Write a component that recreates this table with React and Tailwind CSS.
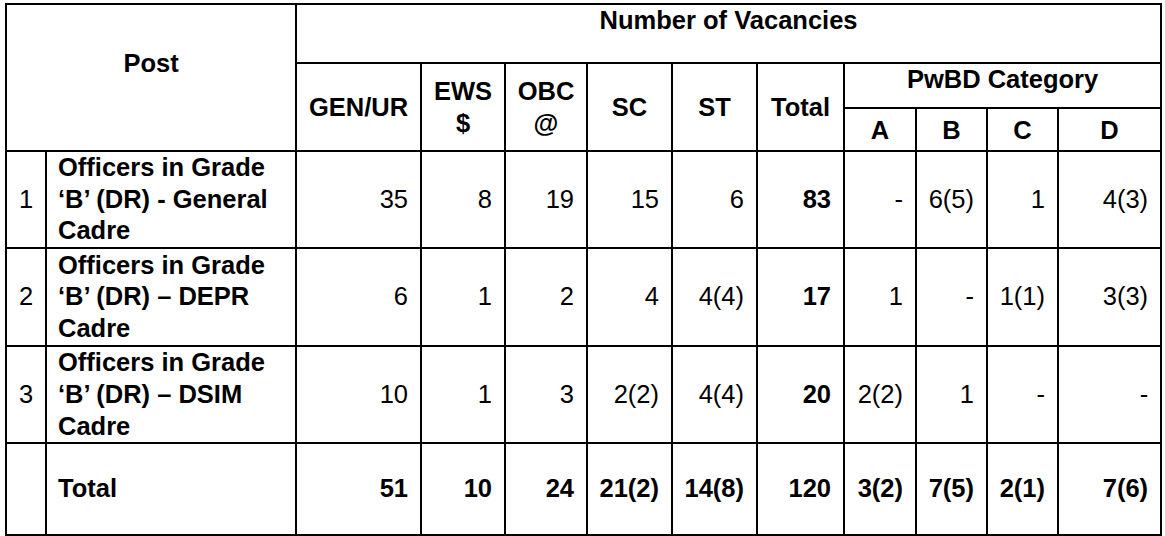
const rows = [
  {
    n: '1',
    post: ['Officers in Grade', '‘B’ (DR) - General', 'Cadre'],
    vals: ['35', '8', '19', '15', '6', '83', '-', '6(5)', '1', '4(3)'],
    h: 'h-[97px]',
  },
  {
    n: '2',
    post: ['Officers in Grade', '‘B’ (DR) – DEPR', 'Cadre'],
    vals: ['6', '1', '2', '4', '4(4)', '17', '1', '-', '1(1)', '3(3)'],
    h: 'h-[98px]',
  },
  {
    n: '3',
    post: ['Officers in Grade', '‘B’ (DR) – DSIM', 'Cadre'],
    vals: ['10', '1', '3', '2(2)', '4(4)', '20', '2(2)', '1', '-', '-'],
    h: 'h-[96px]',
  },
];

const totals = ['51', '10', '24', '21(2)', '14(8)', '120', '3(2)', '7(5)', '2(1)', '7(6)'];

const cell = 'border-r-2 border-b-2 border-black p-0';
const head = cell + ' font-bold text-center';

export default function App() {
  return (
    <div className="min-h-screen bg-white pt-[3px] pl-[5px] text-black font-['Liberation_Sans',Arial,sans-serif] text-[25.5px] leading-[31.7px]">
      <table className="table-fixed border-separate border-spacing-0 border-l-2 border-t-2 border-black w-[1157px]">
        <colgroup>
          <col className="w-[40px]" />
          <col className="w-[250px]" />
          <col className="w-[125px]" />
          <col className="w-[84px]" />
          <col className="w-[82px]" />
          <col className="w-[85px]" />
          <col className="w-[85px]" />
          <col className="w-[87px]" />
          <col className="w-[72px]" />
          <col className="w-[71px]" />
          <col className="w-[71px]" />
          <col className="w-[103px]" />
        </colgroup>
        <thead>
          <tr className="h-[59px]">
            <th colSpan={2} rowSpan={3} className={head + ' align-top pt-[43px]'}>
              Post
            </th>
            <th colSpan={10} className={head + ' align-top leading-[30px]'}>
              Number of Vacancies
            </th>
          </tr>
          <tr className="h-[45px]">
            <th rowSpan={2} className={head + ' align-middle pt-[2px]'}>GEN/UR</th>
            <th rowSpan={2} className={head + ' align-middle pt-[2px]'}>
              EWS
              <br />$
            </th>
            <th rowSpan={2} className={head + ' align-middle pt-[2px]'}>
              OBC
              <br />@
            </th>
            <th rowSpan={2} className={head + ' align-middle pt-[2px]'}>SC</th>
            <th rowSpan={2} className={head + ' align-middle pt-[2px]'}>ST</th>
            <th rowSpan={2} className={head + ' align-middle pt-[2px]'}>Total</th>
            <th colSpan={4} className={head + ' align-top leading-[30px]'}>
              PwBD Category
            </th>
          </tr>
          <tr className="h-[43px]">
            {['A', 'B', 'C', 'D'].map((l) => (
              <th key={l} className={head + ' align-top pt-[6px]'}>
                {l}
              </th>
            ))}
          </tr>
        </thead>
        <tbody>
          {rows.map((r) => (
            <tr key={r.n} className={r.h}>
              <td className={cell + ' text-center align-middle'}>{r.n}</td>
              <td className={cell + ' font-bold align-middle pl-[11px]'}>
                {r.post.map((line, i) => (
                  <div key={i}>{line}</div>
                ))}
              </td>
              {r.vals.map((v, i) => (
                <td
                  key={i}
                  className={cell + ' text-right align-middle pr-[12px]' + (i === 5 ? ' font-bold' : '')}
                >
                  {v}
                </td>
              ))}
            </tr>
          ))}
          <tr className="h-[92px]">
            <td className={cell}></td>
            <td className={cell + ' font-bold align-middle pl-[11px]'}>Total</td>
            {totals.map((v, i) => (
              <td key={i} className={cell + ' font-bold text-right align-middle pr-[12px]'}>
                {v}
              </td>
            ))}
          </tr>
        </tbody>
      </table>
    </div>
  );
}
